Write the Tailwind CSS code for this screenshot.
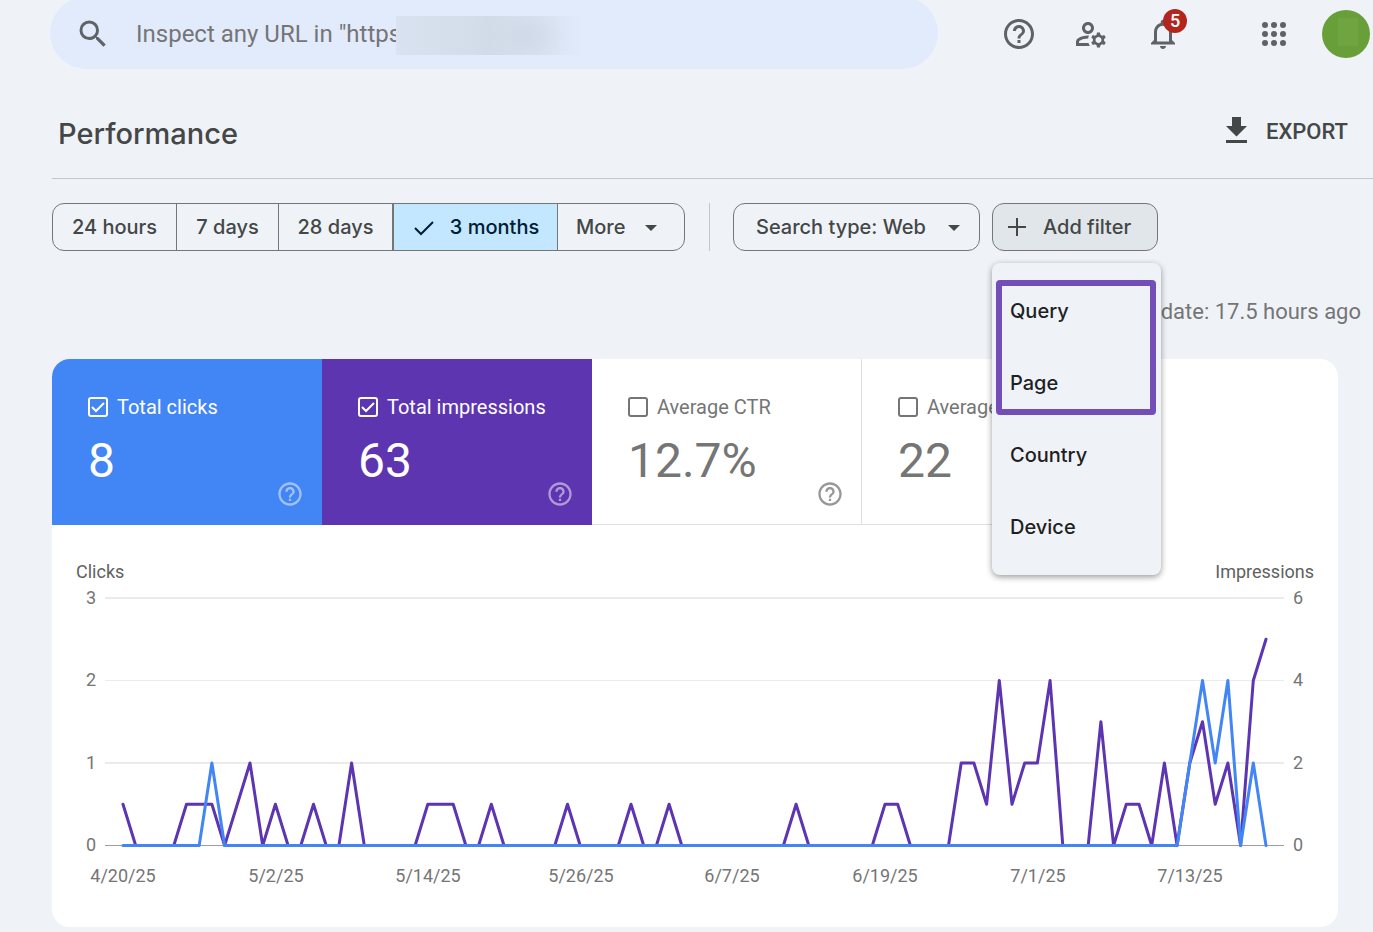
<!DOCTYPE html>
<html lang="en">

<head>
    <meta charset="UTF-8">
    <meta name="viewport" content="width=device-width, initial-scale=1">
    <title>Performance</title>

    <!-- Tailwind CSS (for styling) -->
    <script src="https://cdn.jsdelivr.net/npm/@tailwindcss/browser@4"></script>
</head>

<body class="bg-[#eff3f8] font-[Roboto,sans-serif] text-[#444746] overflow-x-hidden">
    <!-- Shared icon -->
    <svg class="hidden">
        <symbol id="help" viewBox="0 0 24 24">
            <path fill="currentColor" d="M11 18h2v-2h-2v2zm1-16C6.480 2 2 6.480 2 12s4.480 10 10 10 10-4.480 10-10S17.520 2 12 2zm0 18c-4.410 0-8-3.590-8-8s3.590-8 8-8 8 3.590 8 8-3.590 8-8 8zm0-14c-2.210 0-4 1.790-4 4h2c0-1.100.9-2 2-2s2 .9 2 2c0 2-3 1.750-3 5h2c0-2.250 3-2.500 3-5 0-2.210-1.790-4-4-4z"/>
        </symbol>
    </svg>

    <!-- Top bar -->
    <header class="flex items-start h-[69px] pl-[50px] pr-[3px] text-[#5f6368]">
        <label class="flex items-center grow h-[72px] -mt-[3px] mr-[63px] pt-[2px] pl-[25px] rounded-full bg-[#e2ebfc]">
            <svg class="w-9 h-9 shrink-0" viewBox="0 0 24 24">
                <path fill="currentColor" d="M15.500 14h-.79l-.28-.27A6.471 6.471 0 0 0 16 9.500 6.500 6.500 0 1 0 9.500 16c1.610 0 3.090-.59 4.230-1.570l.27.28v.79l5 4.990L20.490 19l-4.990-5zm-6 0C7.010 14 5 11.990 5 9.500S7.010 5 9.500 5 14 7.010 14 9.500 11.990 14 9.500 14z"/>
            </svg>
            <span class="relative flex grow ml-[25px]">
                <input type="text" aria-label="Inspect URL" placeholder='Inspect any URL in "https'
                    class="w-full h-10 text-2xl outline-none placeholder:text-[#757575]">
                <!-- Redacted part of the address -->
                <span class="absolute left-[260px] top-[2px] w-[190px] h-[39px] overflow-hidden bg-[#e2ebfc]">
                    <span class="block w-full h-full bg-linear-to-r from-[#d9e2f0] via-[#d2dce8] via-50% to-[#e2ebfc]"></span>
                    <span class="absolute left-[110px] top-2 w-11 h-6 bg-[#ccd7e6] blur-md"></span>
                </span>
            </span>
        </label>
        <nav class="flex items-center shrink-0 h-[68px]">
            <button aria-label="Help"><svg class="w-9 h-9"><use href="#help"/></svg></button>
            <button aria-label="Users and settings" class="ml-9">
                <svg class="w-9 h-9" viewBox="0 0 24 24" fill="currentColor">
                    <path d="M4 18v-.65c0-.34.16-.66.41-.81C6.100 15.530 8.030 15 10 15c.03 0 .05 0 .08.01.1-.7.3-1.370.59-1.980-.22-.02-.44-.03-.67-.03-2.420 0-4.680.67-6.610 1.820-.88.52-1.390 1.500-1.390 2.530V20h9.260c-.42-.6-.75-1.280-.97-2H4zM10 12c2.210 0 4-1.790 4-4s-1.790-4-4-4-4 1.790-4 4 1.790 4 4 4zm0-6c1.100 0 2 .9 2 2s-.9 2-2 2-2-.9-2-2 .9-2 2-2zM20.750 16c0-.22-.03-.42-.06-.63l1.140-1.010-1-1.730-1.450.49c-.32-.27-.68-.48-1.080-.63L18 11h-2l-.3 1.490c-.4.15-.76.36-1.080.63l-1.450-.49-1 1.730 1.140 1.010c-.03.21-.06.41-.06.63s.03.42.06.63l-1.140 1.010 1 1.730 1.450-.49c.32.27.68.48 1.080.63L16 21h2l.3-1.490c.4-.15.76-.36 1.080-.63l1.450.49 1-1.730-1.140-1.010c.03-.21.06-.41.06-.63zM17 18c-1.100 0-2-.9-2-2s.9-2 2-2 2 .9 2 2-.9 2-2 2z"/>
                </svg>
            </button>
            <button aria-label="Notifications" class="relative ml-9">
                <svg class="w-9 h-9" viewBox="0 0 24 24" fill="currentColor">
                    <path d="M12 22c1.100 0 2-.9 2-2h-4c0 1.100.89 2 2 2zm6-6v-5c0-3.070-1.640-5.640-4.500-6.320V4c0-.83-.67-1.500-1.500-1.500s-1.500.67-1.500 1.500v.68C7.630 5.360 6 7.920 6 11v5l-2 2v1h16v-1l-2-2zm-2 1H8v-6c0-2.480 1.510-4.500 4-4.500s4 2.020 4 4.500v6z"/>
                </svg>
                <span class="absolute left-[18px] -top-[7px] w-6 h-6 rounded-full bg-[#b3261e] text-white text-lg leading-6 font-medium">5</span>
            </button>
            <button aria-label="Apps" class="ml-[75px]">
                <svg class="w-9 h-9" viewBox="0 0 36 36" fill="currentColor">
                    <circle cx="9" cy="9" r="3"/><circle cx="18" cy="9" r="3"/><circle cx="27" cy="9" r="3"/>
                    <circle cx="9" cy="18" r="3"/><circle cx="18" cy="18" r="3"/><circle cx="27" cy="18" r="3"/>
                    <circle cx="9" cy="27" r="3"/><circle cx="18" cy="27" r="3"/><circle cx="27" cy="27" r="3"/>
                </svg>
            </button>
            <button aria-label="Account" class="flex items-center justify-center w-12 h-12 ml-[30px] rounded-full bg-[#689f38]">
                <span class="w-5 h-7 ml-1 -mt-1 bg-[#70a442]"></span>
            </button>
        </nav>
    </header>

    <main class="pl-[52px]">
        <!-- Title -->
        <div class="flex items-center justify-between h-[110px] pt-4 pr-[25px] border-b border-[#c4c7c5]">
            <h1 class="pt-1 pl-[6px] font-[Inter,sans-serif] text-[29px] font-medium">Performance</h1>
            <button class="flex items-center gap-3 text-[22px] font-medium">
                <svg class="w-9 h-9" viewBox="0 0 36 36" fill="currentColor">
                    <path d="M14 3h9v9h6L18.500 22.500 8 12h6zM8 26h21v3H8z"/>
                </svg>
                EXPORT
            </button>
        </div>

        <!-- Filters -->
        <div class="flex items-center mt-6 font-[Inter,sans-serif] text-xl font-medium">
            <div class="flex h-12 border border-[#747775] rounded-xl overflow-hidden">
                <button class="w-[124px] border-r border-[#747775]">24 hours</button>
                <button class="w-[102px] border-r border-[#747775]">7 days</button>
                <button class="w-[115px] border-r-2 border-[#747775]">28 days</button>
                <button class="flex items-center justify-center gap-[14px] w-[164px] border-r border-[#747775] bg-[#c2e7ff] text-[#001d35]">
                    <svg class="w-6 h-6" viewBox="0 0 24 24" fill="none" stroke="currentColor" stroke-width="2">
                        <path d="M3 13l6 6L21 7"/>
                    </svg>
                    3 months
                </button>
                <button class="flex items-center gap-5 w-[126px] pl-[18px]">
                    More
                    <svg class="w-3 h-3" viewBox="0 0 12 12"><path fill="currentColor" d="M0 4h12L6 10z"/></svg>
                </button>
            </div>
            <div class="w-px h-12 ml-6 mr-[23px] bg-[#c4c7c5]"></div>
            <button class="flex items-center gap-[22px] w-[247px] h-12 pl-[22px] border border-[#747775] rounded-xl">
                Search type: Web
                <svg class="w-3 h-3" viewBox="0 0 12 12"><path fill="currentColor" d="M0 4h12L6 10z"/></svg>
            </button>
            <div class="relative ml-3">
                <button class="flex items-center gap-4 w-[166px] h-12 pl-[14px] border border-[#747775] rounded-xl bg-[#e1e6ea]">
                    <svg class="w-5 h-5" viewBox="0 0 20 20" stroke="currentColor" stroke-width="2"><path d="M10 1v18M1 10h18"/></svg>
                    Add filter
                </button>
                <!-- Open menu -->
                <div class="absolute z-10 left-0 top-[60px] flex flex-col w-[169px] py-3 rounded-lg bg-[#eff3f8] text-[#1f1f1f] shadow-[0_2px_6px_rgba(0,0,0,0.4)]">
                    <button class="h-[72px] px-[18px] text-left">Query</button>
                    <button class="h-[72px] px-[18px] text-left">Page</button>
                    <button class="h-[72px] px-[18px] text-left">Country</button>
                    <button class="h-[72px] px-[18px] text-left">Device</button>
                    <div class="absolute left-1 top-[17px] w-40 h-[135px] border-6 border-[#734db8] rounded-sm pointer-events-none"></div>
                </div>
            </div>
        </div>

        <p class="flex items-center justify-end h-[108px] pt-3 pr-3 text-[22px] text-[#757575]">Last update: 17.5 hours ago</p>

        <!-- Report card -->
        <section class="mr-[35px] mb-[5px] rounded-[18px] bg-white overflow-hidden">
            <div class="flex text-xl text-[#757575]">
                <div class="flex flex-col w-[270px] h-[166px] pl-9 pt-9 pr-5 bg-[#4285f4] text-white">
                    <label class="flex items-center gap-[9px] h-6">
                        <input type="checkbox" checked class="peer appearance-none w-5 h-5 border-2 border-current rounded-[3px]">
                        <svg class="absolute w-5 h-5 hidden peer-checked:block" viewBox="0 0 20 20" fill="none" stroke="currentColor" stroke-width="2"><path d="M4 10l4 4 8-8"/></svg>
                        Total clicks
                    </label>
                    <span class="mt-[15px] text-5xl leading-[54px]">8</span>
                    <button aria-label="About total clicks" class="self-end -mt-2 -mr-[2px] opacity-50"><svg class="w-7 h-7"><use href="#help"/></svg></button>
                </div>
                <div class="flex flex-col w-[270px] h-[166px] pl-9 pt-9 pr-5 bg-[#5e35b1] text-white">
                    <label class="flex items-center gap-[9px] h-6">
                        <input type="checkbox" checked class="peer appearance-none w-5 h-5 border-2 border-current rounded-[3px]">
                        <svg class="absolute w-5 h-5 hidden peer-checked:block" viewBox="0 0 20 20" fill="none" stroke="currentColor" stroke-width="2"><path d="M4 10l4 4 8-8"/></svg>
                        Total impressions
                    </label>
                    <span class="mt-[15px] text-5xl leading-[54px]">63</span>
                    <button aria-label="About total impressions" class="self-end -mt-2 -mr-[2px] opacity-50"><svg class="w-7 h-7"><use href="#help"/></svg></button>
                </div>
                <div class="flex flex-col w-[270px] h-[166px] pl-9 pt-9 pr-[19px] border-r border-b border-[#e0e0e0]">
                    <label class="flex items-center gap-[9px] h-6">
                        <input type="checkbox" class="appearance-none w-5 h-5 border-2 border-current rounded-[3px]">
                        Average CTR
                    </label>
                    <span class="mt-[15px] text-5xl leading-[54px]">12.7%</span>
                    <button aria-label="About average CTR" class="self-end -mt-2 -mr-[2px] opacity-75"><svg class="w-7 h-7"><use href="#help"/></svg></button>
                </div>
                <div class="flex flex-col w-[270px] h-[166px] pl-9 pt-9 pr-[19px] border-r border-b border-[#e0e0e0]">
                    <label class="flex items-center gap-[9px] h-6">
                        <input type="checkbox" class="appearance-none w-5 h-5 border-2 border-current rounded-[3px]">
                        Average position
                    </label>
                    <span class="mt-[15px] text-5xl leading-[54px]">22</span>
                    <button aria-label="About average position" class="self-end -mt-2 -mr-[2px] opacity-75"><svg class="w-7 h-7"><use href="#help"/></svg></button>
                </div>
            </div>

            <!-- Chart -->
            <svg class="block w-full h-auto text-lg fill-[#757575]" viewBox="0 0 1286 402">
                <g class="fill-[#616161]">
                    <text x="24" y="53">Clicks</text>
                    <text x="1262" y="53" text-anchor="end">Impressions</text>
                </g>
                <g stroke="#ebebeb">
                    <path stroke-width="2" d="M53 73H1232M53 238H1232"/>
                    <path d="M53 155.500H1232"/>
                    <path stroke="#9e9e9e" d="M53 320.500H1232"/>
                </g>
                <g text-anchor="end">
                    <text x="44" y="79">3</text>
                    <text x="44" y="161">2</text>
                    <text x="44" y="244">1</text>
                    <text x="44" y="326">0</text>
                </g>
                <g>
                    <text x="1241" y="79">6</text>
                    <text x="1241" y="161">4</text>
                    <text x="1241" y="244">2</text>
                    <text x="1241" y="326">0</text>
                </g>
                <g text-anchor="middle">
                    <text x="71" y="357">4/20/25</text>
                    <text x="224" y="357">5/2/25</text>
                    <text x="376" y="357">5/14/25</text>
                    <text x="529" y="357">5/26/25</text>
                    <text x="680" y="357">6/7/25</text>
                    <text x="833" y="357">6/19/25</text>
                    <text x="986" y="357">7/1/25</text>
                    <text x="1138" y="357">7/13/25</text>
                </g>
                <g fill="none" stroke-width="3" stroke-linejoin="round" stroke-linecap="round">
                    <polyline id="impressionsLine" stroke="#5e35b1"/>
                    <polyline id="clicksLine" stroke="#4285f4"/>
                </g>
            </svg>
        </section>
    </main>

    <script>
        // Non-zero days, counted from 4/20/25
        const impressions = {
            0: 1, 5: 1, 6: 1, 7: 1, 9: 1, 10: 2, 12: 1, 15: 1, 18: 2, 24: 1, 25: 1, 26: 1, 29: 1, 35: 1,
            40: 1, 43: 1, 53: 1, 60: 1, 61: 1, 66: 2, 67: 2, 68: 1, 69: 4, 70: 1, 71: 2, 72: 2, 73: 4,
            77: 3, 79: 1, 80: 1, 82: 2, 84: 2, 85: 3, 86: 1, 87: 2, 89: 4, 90: 5
        };
        const clicks = { 7: 1, 84: 1, 85: 2, 86: 1, 87: 2, 89: 1 };

        function drawLine(id, data, max) {
            const points = [];
            for (let day = 0; day <= 90; day++) {
                const y = 320.5 - (data[day] || 0) / max * 247.5;
                points.push((71 + day * 12.7) + ',' + y);
            }
            document.getElementById(id).setAttribute('points', points.join(' '));
        }

        drawLine('impressionsLine', impressions, 6);
        drawLine('clicksLine', clicks, 3);
    </script>
</body>

</html>
